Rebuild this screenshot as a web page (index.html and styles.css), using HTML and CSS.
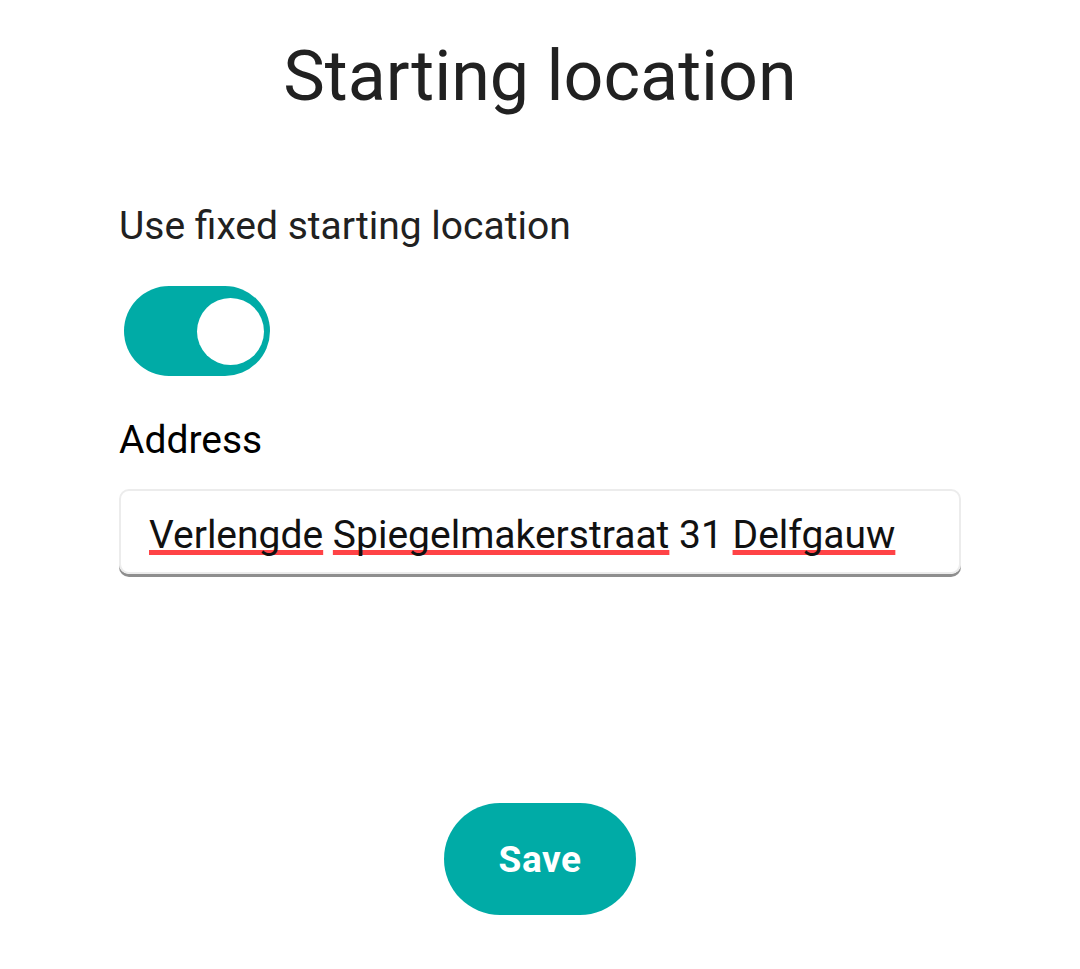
FILE: index.html
```html
<!DOCTYPE html>
<html lang="en">
<head>
    <meta charset="UTF-8">
    <meta name="viewport" content="width=device-width, initial-scale=1.0">
    <title>Starting location</title>
    <link rel="stylesheet" href="styles.css">
</head>
<body>
    <div class="page">
        <h1>Starting location</h1>

        <div class="form">
            <label class="field-label">Use fixed starting location</label>

            <div class="toggle on">
                <span class="knob"></span>
            </div>

            <label class="field-label address-label">Address</label>

            <div class="address-input">
                <span class="misspelled">Verlengde</span> <span class="misspelled">Spiegelmakerstraat</span> 31 <span class="misspelled">Delfgauw</span>
            </div>
        </div>

        <div class="actions">
            <button class="save-btn">Save</button>
        </div>
    </div>
</body>
</html>
```

FILE: styles.css
```css
body {
    font-family: Roboto, "Noto Sans", Arial, sans-serif;
    background-color: #fff;
    color: #212121;
    margin: 0;
}

.page {
    width: 1080px;
    height: 969px;
    display: flex;
    flex-direction: column;
}

h1 {
    font-size: 70px;
    font-weight: 400;
    text-align: center;
    margin: 0;
    padding-top: 35px;
    line-height: 82px;
}

.form {
    padding: 0 119px;
    margin-top: 86px;
}

.field-label {
    display: block;
    font-size: 39px;
    line-height: 46px;
}

.address-label {
    color: #000;
    margin-top: 41px;
}

.toggle {
    width: 146px;
    height: 90px;
    border-radius: 45px;
    background-color: #00aba6;
    margin: 37px 0 0 5px;
    position: relative;
}

.toggle .knob {
    position: absolute;
    top: 12px;
    right: 6px;
    width: 67px;
    height: 67px;
    border-radius: 50%;
    background-color: #fff;
}

.address-input {
    margin-top: 26px;
    height: 85px;
    box-sizing: border-box;
    border: 2px solid #ececec;
    border-radius: 10px;
    box-shadow: 0 3px 0 #8e8e8e;
    padding: 21px 0 0 28px;
    font-size: 39px;
    line-height: 46px;
    color: #111;
    white-space: nowrap;
}

.misspelled {
    text-decoration: underline;
    text-decoration-color: #ff4346;
    text-decoration-thickness: 5px;
    text-underline-offset: 2px;
    text-decoration-skip-ink: none;
}

.actions {
    display: flex;
    justify-content: center;
    margin-top: 229px;
}

.save-btn {
    width: 192px;
    height: 112px;
    border: none;
    border-radius: 56px;
    background-color: #00aba6;
    color: #fff;
    font-family: Roboto, "Noto Sans", Arial, sans-serif;
    font-size: 37px;
    font-weight: 700;
    letter-spacing: 0.5px;
    cursor: pointer;
}
```
